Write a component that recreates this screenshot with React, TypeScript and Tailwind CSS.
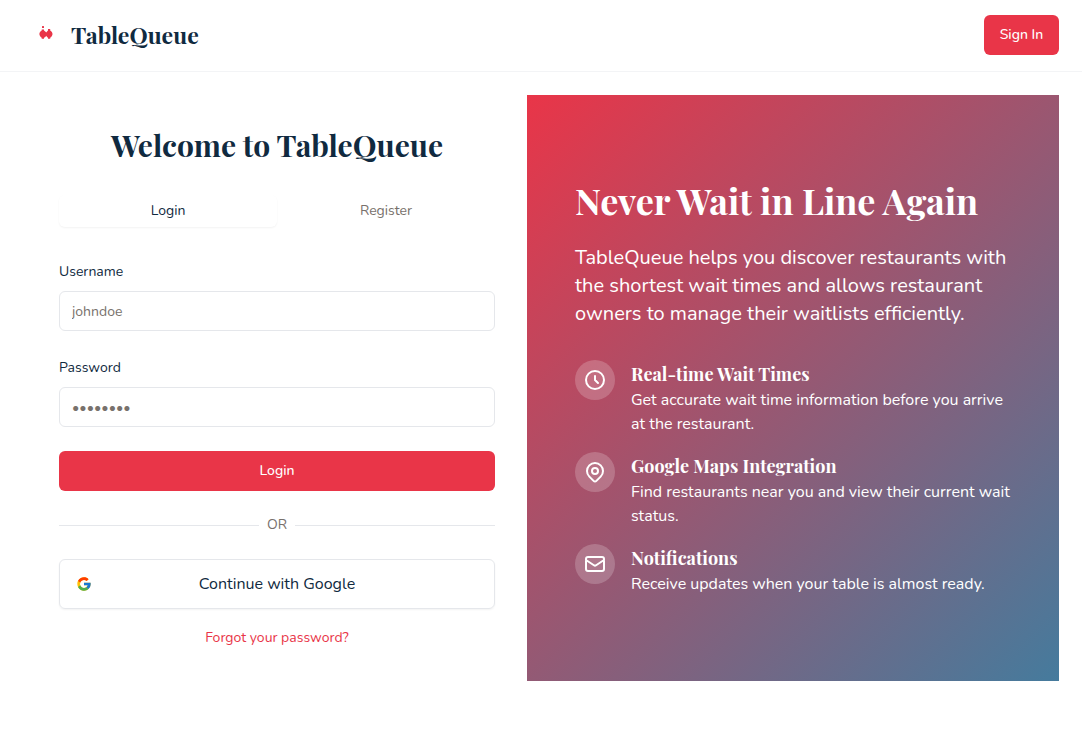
import React, { useState } from "react";
import { FcGoogle } from "react-icons/fc";

const features = [
  {
    path: "M12 8v4l3 3m6-3a9 9 0 11-18 0 9 9 0 0118 0z",
    title: "Real-time Wait Times",
    text: "Get accurate wait time information before you arrive at the restaurant.",
  },
  {
    path: "M17.657 16.657L13.414 20.9a1.998 1.998 0 01-2.827 0l-4.244-4.243a8 8 0 1111.314 0z M15 11a3 3 0 11-6 0 3 3 0 016 0z",
    title: "Google Maps Integration",
    text: "Find restaurants near you and view their current wait status.",
  },
  {
    path: "M3 8l7.89 5.26a2 2 0 002.22 0L21 8M5 19h14a2 2 0 002-2V7a2 2 0 00-2-2H5a2 2 0 00-2 2v10a2 2 0 002 2z",
    title: "Notifications",
    text: "Receive updates when your table is almost ready.",
  },
];

const serif = "font-['Playfair_Display','Liberation_Serif',serif]";

function Logo() {
  return (
    <svg viewBox="0 0 32 32" className="size-8" fill="#e93548" aria-hidden="true">
      <rect x="11" y="7" width="2" height="2" rx="0.5" />
      <path d="M10.700 10.500h2.300v1c1 .5 1.700 1.200 2.200 2.100.5-.9 1.100-1.500 1.800-2.100V10h2.200v1.500c1.400.8 2.300 2.100 2.300 3.600s-.9 2.800-2.300 3.600v1H17v-1c-.7-.5-1.300-1.100-1.800-2-.5.900-1.200 1.500-2.200 2v1h-2.300v-1C9.300 17.900 8.400 16.600 8.400 15.100s.9-2.800 2.300-3.600z" />
    </svg>
  );
}

export default function App() {
  const [tab, setTab] = useState("login");
  const tabClass = (active: boolean) =>
    active
      ? "rounded-md bg-white text-[#102a40] shadow-xs"
      : "rounded-md text-[#78716c]";

  return (
    <div className="min-h-screen bg-white font-['Nunito','Lato',sans-serif] text-[#102a40]">
      <header className="flex items-center justify-between border-b border-gray-100 px-[23px] pt-[15px] pb-4">
        <a href="#" className="flex items-center gap-2 pl-2">
          <Logo />
          <span className={`${serif} text-[23px] leading-8 font-bold`}>TableQueue</span>
        </a>
        <button type="button" className="h-10 w-[75px] rounded-md bg-[#e93548] text-sm font-medium text-white">
          Sign In
        </button>
      </header>

      <main className="grid px-[23px] py-[23px] md:grid-cols-[504fr_532fr]">
        <section className="pt-8 pr-8 pl-9">
          <h1 className={`${serif} text-center text-3xl font-bold`}>Welcome to TableQueue</h1>

          <div role="tablist" className="mt-8 grid grid-cols-2 text-sm">
            <button
              type="button"
              role="tab"
              aria-selected={tab === "login"}
              onClick={() => setTab("login")}
              className={`h-8 ${tabClass(tab === "login")}`}
            >
              Login
            </button>
            <button
              type="button"
              role="tab"
              aria-selected={tab === "register"}
              onClick={() => setTab("register")}
              className={`h-8 ${tabClass(tab === "register")}`}
            >
              Register
            </button>
          </div>

          <form className="mt-8 flex flex-col gap-6 text-sm" onSubmit={(e) => e.preventDefault()}>
            <div className="flex flex-col gap-[9px] pt-[3px]">
              <label htmlFor="username" className="leading-5">Username</label>
              <input
                id="username"
                type="text"
                placeholder="johndoe"
                className="h-10 w-full rounded-md border border-gray-200 px-3 placeholder:text-[#78716c]"
              />
            </div>
            <div className="flex flex-col gap-[9px] pt-[3px]">
              <label htmlFor="password" className="leading-5">Password</label>
              <input
                id="password"
                type="password"
                placeholder="••••••••"
                className="h-10 w-full rounded-md border border-gray-200 px-3 placeholder:text-[#78716c]"
              />
            </div>
            <button type="submit" className="h-10 rounded-md bg-[#e93548] font-medium text-white">
              Login
            </button>
          </form>

          <div className="mt-6 flex items-center gap-2 text-sm text-[#78716c]">
            <span className="h-px flex-1 bg-gray-200" />
            <span>OR</span>
            <span className="h-px flex-1 bg-gray-200" />
          </div>

          <button
            type="button"
            className="mt-6 grid h-[50px] w-full grid-cols-[16px_1fr_16px] items-center rounded-md border border-gray-200 px-4 shadow-xs"
          >
            <FcGoogle size={16} />
            <span>Continue with Google</span>
          </button>

          <p className="mt-5 text-center text-sm leading-[18px]">
            <a href="#" className="text-[#e93548]">Forgot your password?</a>
          </p>
        </section>

        <section className="flex flex-col justify-center bg-[linear-gradient(135deg,#e93548,#457b9d)] px-12 py-[85px] text-white">
          <h2 className={`${serif} text-4xl font-bold`}>Never Wait in Line Again</h2>
          <p className="mt-6 text-xl leading-7">
            TableQueue helps you discover restaurants with the shortest wait times and allows restaurant owners to
            manage their waitlists efficiently.
          </p>
          <ul className="mt-8 flex flex-col gap-4">
            {features.map(({ path, title, text }) => (
              <li key={title} className="flex items-start gap-4">
                <span className="flex size-10 shrink-0 items-center justify-center rounded-full bg-white/20">
                  <svg
                    viewBox="0 0 24 24"
                    className="size-6"
                    fill="none"
                    stroke="currentColor"
                    strokeWidth="2"
                    strokeLinecap="round"
                    strokeLinejoin="round"
                    aria-hidden="true"
                  >
                    <path d={path} />
                  </svg>
                </span>
                <div>
                  <h3 className={`${serif} text-lg leading-7 font-bold`}>{title}</h3>
                  <p className="leading-6">{text}</p>
                </div>
              </li>
            ))}
          </ul>
        </section>
      </main>
    </div>
  );
}
